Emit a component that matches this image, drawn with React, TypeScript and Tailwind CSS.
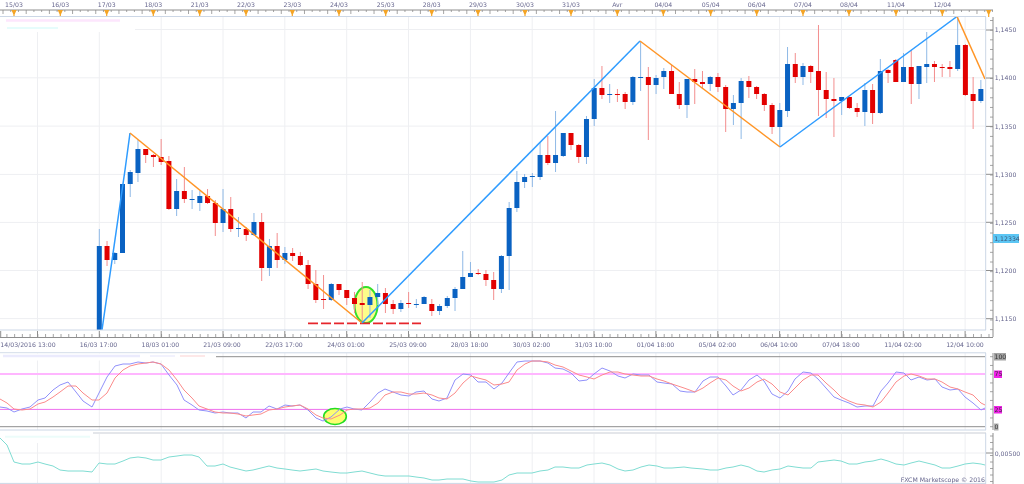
const BLUE = '#0a62c2';
const RED = '#e20000';
const TEXT = '#66668e';
const AXIS = '#8e8e8e';
const PANE = '#ccd7e6';
const GRID = '#eeeff2';

// [up?, wick top, body top, body bottom, wick bottom]
const candles: [number, number, number, number, number][] = [
  [1, 229, 246, 330, 330], [0, 241, 246, 260, 266], [1, 252, 253, 260, 264], [1, 184, 184, 253, 253],
  [1, 170, 172, 184, 197], [1, 140, 149, 173, 182], [0, 149, 149, 155, 163], [0, 154, 155, 157, 167],
  [0, 139, 157, 162, 165], [0, 156, 161, 209, 210], [1, 179, 191, 209, 216], [0, 167, 191, 199, 203],
  [1, 190, 199, 200, 209], [1, 191, 196, 203, 211], [0, 189, 196, 203, 204], [0, 200, 203, 223, 236],
  [1, 189, 209, 223, 232], [0, 197, 209, 229, 232], [1, 217, 228, 229, 237], [0, 227, 229, 235, 241],
  [1, 213, 222, 235, 236], [0, 213, 222, 268, 281], [1, 239, 246, 268, 276], [0, 233, 246, 260, 268],
  [1, 247, 253, 260, 264], [0, 248, 253, 256, 261], [0, 252, 256, 265, 266], [0, 260, 265, 284, 289],
  [0, 270, 284, 300, 303], [0, 275, 299, 300, 309], [1, 283, 284, 300, 301], [0, 284, 284, 290, 295],
  [0, 290, 290, 298, 305], [0, 292, 298, 304, 313], [0, 282, 303, 305, 323], [1, 290, 297, 305, 318],
  [1, 284, 293, 297, 305], [0, 288, 293, 304, 313], [0, 300, 304, 309, 314], [1, 300, 303, 309, 312],
  [0, 292, 303, 304, 308], [1, 299, 304, 305, 308], [1, 296, 297, 304, 304], [0, 299, 304, 311, 316],
  [1, 304, 306, 311, 315], [1, 296, 298, 306, 308], [1, 287, 289, 298, 311], [1, 251, 277, 289, 289],
  [1, 262, 273, 277, 277], [0, 269, 273, 274, 275], [0, 270, 274, 280, 286], [0, 272, 280, 289, 300],
  [1, 255, 256, 289, 293], [1, 202, 208, 256, 290], [1, 171, 182, 208, 212], [1, 174, 177, 182, 188],
  [1, 173, 176, 177, 187], [1, 143, 155, 177, 180], [0, 136, 155, 163, 165], [1, 111, 155, 163, 172],
  [1, 133, 133, 156, 157], [0, 133, 133, 145, 150], [0, 144, 145, 157, 163], [1, 116, 119, 157, 164],
  [1, 79, 88, 119, 126], [0, 66, 88, 95, 99], [1, 84, 94, 95, 103], [0, 89, 94, 94, 102],
  [0, 92, 94, 102, 109], [1, 76, 77, 102, 105], [1, 41, 77, 78, 91], [0, 67, 77, 85, 140],
  [1, 75, 78, 85, 94], [1, 68, 71, 77, 89], [0, 65, 71, 94, 94], [0, 82, 94, 105, 109],
  [1, 79, 79, 105, 118], [0, 69, 79, 82, 104], [0, 71, 82, 84, 89], [1, 76, 77, 84, 91],
  [0, 73, 77, 87, 92], [0, 85, 87, 109, 132], [1, 95, 103, 109, 125], [1, 78, 81, 103, 139],
  [0, 76, 81, 87, 98], [0, 86, 87, 94, 99], [0, 93, 94, 105, 111], [0, 103, 105, 127, 134],
  [1, 103, 110, 127, 147], [1, 47, 64, 111, 117], [0, 53, 64, 77, 83], [1, 63, 66, 77, 85],
  [0, 65, 66, 72, 83], [0, 25, 71, 90, 116], [0, 72, 90, 99, 118], [0, 78, 99, 101, 137],
  [1, 97, 97, 101, 115], [0, 97, 97, 108, 109], [0, 103, 108, 112, 117], [1, 83, 90, 112, 126],
  [0, 84, 90, 113, 124], [1, 59, 71, 113, 114], [0, 69, 70, 73, 83], [0, 59, 60, 82, 82],
  [1, 53, 67, 82, 82], [0, 50, 67, 84, 104], [1, 66, 66, 84, 99], [1, 32, 64, 67, 83],
  [0, 61, 64, 67, 82], [0, 64, 67, 68, 77], [0, 61, 67, 69, 77], [1, 17, 45, 69, 71],
  [0, 44, 45, 95, 96], [0, 77, 94, 101, 129], [1, 80, 89, 101, 103],
];

const candleX = (i: number) => 99.3 + i * 7.733;

const gridX = [37.5, 99.3, 161.2, 223, 284.8, 346.7, 408.5, 470.4, 532.2, 594, 655.9, 717.8, 779.6, 841.4, 903.3, 965.1];
const gridY = [29.5, 77.8, 126.1, 174.4, 222.4, 270.5, 318.6];

const dateMarks: [number, string][] = [
  [14, '15/03'], [60.3, '16/03'], [106.7, '17/03'], [153.3, '18/03'], [199.7, '21/03'], [246, '22/03'],
  [292.3, '23/03'], [339, '24/03'], [385.7, '25/03'], [431.7, '28/03'], [478, '29/03'], [525, '30/03'],
  [571, '31/03'], [617.3, 'Avr'], [663.3, '04/04'], [710.7, '05/04'], [756.7, '06/04'], [803, '07/04'],
  [849, '08/04'], [896, '11/04'], [942.3, '12/04'], [988.7, ''],
];

const timeLabels: [number, string][] = [
  [28, '14/03/2016 13:00'], [98.5, '16/03 17:00'], [160.3, '18/03 01:00'], [222, '21/03 09:00'],
  [284, '22/03 17:00'], [346, '24/03 01:00'], [408, '25/03 09:00'], [469.5, '28/03 18:00'],
  [531.5, '30/03 02:00'], [593.5, '31/03 10:00'], [655.5, '01/04 18:00'], [717.3, '05/04 02:00'],
  [779, '06/04 10:00'], [841, '07/04 18:00'], [903, '11/04 02:00'], [965, '12/04 10:00'],
];

const priceLabels: [number, string][] = [
  [30, '1,1450'], [78, '1,1400'], [126.4, '1,1350'], [174.3, '1,1300'], [222.3, '1,1250'], [270.5, '1,1200'], [318.7, '1,1150'],
];

// oscillator and lower pane curves, as x/y pairs read off the chart
const oscBlue = '0,407 7,408 14,412 22,409 30,407 38,400 45,398 53,390 60,385 68,382 76,392 83,401 92,407 99,393 107,377 115,366 123,364 130,364 138,362 146,363 153,362 161,364 169,375 177,385 184,400 192,405 199,410 207,411 215,413 223,412 230,413 238,413 246,418 253,412 261,412 269,406 277,409 285,405 292,406 300,405 308,410 316,418 323,421 331,417 340,409 347,407 354,409 362,410 370,402 378,393 385,389 393,392 401,395 409,396 416,392 424,391 432,399 439,401 447,398 455,380 463,374 471,375 478,382 486,382 494,389 502,383 509,373 517,362 525,361 532,361 540,361 548,363 555,368 563,369 571,373 579,381 587,380 594,374 602,368 610,371 618,376 625,378 633,374 641,375 649,375 657,382 664,383 672,384 680,391 687,392 695,392 703,381 710,377 718,377 726,386 733,395 741,390 749,380 757,375 764,381 772,394 780,398 788,391 795,379 803,372 811,373 818,379 826,388 834,397 841,400 849,403 857,407 865,406 873,406 881,391 888,383 896,372 904,373 911,380 919,377 927,380 935,379 942,387 950,390 958,389 965,397 973,403 981,410 985,408';
const oscRed = '0,399 7,403 14,409 22,410 30,409 38,404 45,402 53,397 60,392 68,386 76,386 83,393 92,400 99,400 107,393 115,378 123,370 130,366 138,364 146,363 153,362 161,364 169,370 177,380 184,390 192,398 199,406 207,409 215,412 223,413 230,413 238,414 246,416 253,415 261,414 269,410 277,409 285,407 292,406 300,405 308,409 316,415 323,418 331,419 340,415 347,410 354,409 362,409 370,408 378,403 385,395 393,392 401,392 409,394 416,394 424,393 432,395 439,398 447,399 455,393 463,383 471,376 478,378 486,380 494,385 502,384 509,382 517,370 525,364 532,361 540,361 548,362 555,365 563,367 571,371 579,375 587,377 594,379 602,375 610,372 618,372 625,374 633,375 641,376 649,376 657,379 664,381 672,384 684,388 695,392 703,388 710,383 718,378 726,380 733,386 741,391 749,388 757,382 764,379 772,384 780,392 788,395 795,388 803,380 811,375 818,375 826,383 834,390 841,397 849,401 857,404 865,405 873,407 881,402 888,393 896,382 904,376 911,374 919,376 927,379 935,379 942,382 950,387 958,389 965,392 973,395 981,403 985,405';
const volLine = '0,438 7,445 14,462 22,464 30,464 38,462 45,464 53,466 60,470 68,471 76,471 83,471 92,472 99,463 107,464 115,464 123,461 130,458 138,457 146,458 153,460 161,460 169,457 177,456 184,455 192,455 199,457 207,466 215,466 223,464 230,467 238,469 246,471 253,470 261,468 269,466 277,468 285,469 292,470 300,471 308,470 316,469 323,471 331,472 340,473 347,473 354,472 362,471 370,473 378,475 385,476 393,476 401,476 409,476 416,477 424,478 432,480 439,480 447,479 455,479 463,479 471,481 478,482 486,482 494,482 502,480 509,475 517,473 525,473 532,473 540,471 548,470 555,467 563,467 571,468 579,468 587,465 594,464 602,463 610,465 618,469 625,471 633,470 641,467 649,465 657,466 664,468 672,468 684,467 691,468 703,469 710,470 718,470 726,468 733,467 741,465 749,467 757,471 764,472 772,470 780,469 788,466 795,467 803,468 811,468 818,462 826,461 834,460 841,461 849,464 857,464 865,462 873,461 881,459 888,461 896,464 904,465 911,463 919,461 927,463 935,465 942,468 950,468 958,466 965,464 973,463 981,464 985,465';

function range(start: number, end: number, step: number) {
  const out: number[] = [];
  for (let v = start; v < end; v += step) out.push(v);
  return out;
}

function VerticalGrid({ top, bottom }: { top: number; bottom: number }) {
  return (
    <>
      {gridX.map((x) => (
        <line key={x} x1={x} x2={x} y1={top} y2={bottom} stroke={GRID} strokeWidth="1" />
      ))}
    </>
  );
}

function DateRuler() {
  return (
    <svg viewBox="0 0 1024 17" className="block h-[17px] w-[1024px] blur-[0.4px]">
      {dateMarks.map(([x, label]) => (
        <text key={x} x={x} y="7.4" textAnchor="middle" fontSize="6.2" fill={TEXT}>
          {label}
        </text>
      ))}
      <line x1="0" x2="993" y1="10" y2="10" stroke={AXIS} strokeWidth="1" />
      {range(3, 993, 7.73).map((x, i) => (
        <line key={x} x1={x} x2={x} y1="10" y2={i % 3 === 0 ? 14 : 12} stroke={AXIS} strokeWidth="0.8" />
      ))}
      {dateMarks.map(([x]) => (
        <path key={x} d={`M${x - 2.6} 10 h5.2 l-2 4.5 v2.5 h-1.2 v-2.5 z`} fill="#f4a425" />
      ))}
      <line x1="0" x2="986" y1="16.5" y2="16.5" stroke={PANE} strokeWidth="1" />
    </svg>
  );
}

function PricePane() {
  return (
    <svg viewBox="0 17 1024 320" className="block h-[320px] w-[1024px] blur-[0.4px]">
      <VerticalGrid top={17} bottom={330} />
      {gridY.map((y) => (
        <line key={y} x1="0" x2="985" y1={y} y2={y} stroke={GRID} strokeWidth="1" />
      ))}
      {/* legend sits over the grid */}
      <rect x="0" y="17" width="135" height="15" fill="#ffffff" />
      <line x1="6" x2="120" y1="20.5" y2="20.5" stroke="#fde6fd" strokeWidth="2.5" />
      <line x1="7" x2="58" y1="28" y2="28" stroke="#e6fcfc" strokeWidth="2" />

      <ellipse cx="366" cy="305" rx="11.5" ry="18" fill="#fdfd8a" stroke="#34e02a" strokeWidth="2" />

      {candles.map(([up, wickTop, top, bottom, wickBottom], i) => (
        <g key={i}>
          <line
            x1={candleX(i)}
            x2={candleX(i)}
            y1={wickTop}
            y2={wickBottom}
            stroke={up ? '#8fb9e6' : '#f38e8e'}
            strokeWidth="1"
          />
          <rect
            x={candleX(i) - 2.5}
            y={top}
            width="5"
            height={Math.max(bottom - top, 1)}
            fill={up ? BLUE : RED}
          />
        </g>
      ))}

      <line x1="308" x2="421" y1="323.3" y2="323.3" stroke="#e6262c" strokeWidth="1.8" strokeDasharray="10 3" />

      <polyline points="102,330 125,170 130,133" fill="none" stroke="#2f9cff" strokeWidth="1.5" />
      <polyline points="130,133 362,323" fill="none" stroke="#ff9526" strokeWidth="1.5" />
      <polyline points="362,323 640,41" fill="none" stroke="#2f9cff" strokeWidth="1.5" />
      <polyline points="640,41 780,147" fill="none" stroke="#ff9526" strokeWidth="1.5" />
      <polyline points="780,147 957,16.5" fill="none" stroke="#2f9cff" strokeWidth="1.5" />
      <polyline points="957,16.5 985,79" fill="none" stroke="#ff9526" strokeWidth="1.5" />

      <line x1="0" x2="986" y1="330" y2="330" stroke={PANE} strokeWidth="1" />
      <line x1="985.7" x2="985.7" y1="17" y2="330" stroke={PANE} strokeWidth="1" />
      <line x1="993" x2="993" y1="17" y2="337" stroke={AXIS} strokeWidth="1" />
      {range(20.5, 337, 9.66).map((y) => (
        <line key={y} x1="990" x2="993" y1={y} y2={y} stroke={AXIS} strokeWidth="0.8" />
      ))}
      {priceLabels.map(([y, label]) => (
        <g key={label}>
          <line x1="986" x2="993" y1={y} y2={y} stroke={AXIS} strokeWidth="1" />
          <text x="994.7" y={y + 2.4} fontSize="6.2" fill={TEXT}>
            {label}
          </text>
        </g>
      ))}
      <rect x="993" y="234" width="26" height="9" fill="#5cc6f4" />
      <text x="994.2" y="241" fontSize="6.2" fill="#3c5678">
        1,12334
      </text>

      {/* time ruler ticks along the pane's foot */}
      {range(6.9, 993, 7.733).map((x) => (
        <line key={x} x1={x} x2={x} y1="334" y2="337" stroke={AXIS} strokeWidth="0.8" />
      ))}
      {[0.7, ...gridX].map((x) => (
        <line key={x} x1={x} x2={x} y1="331" y2="337" stroke={AXIS} strokeWidth="1" />
      ))}
    </svg>
  );
}

function TimeAxis() {
  return (
    <svg viewBox="0 337 1024 15" className="block h-[15px] w-[1024px] blur-[0.4px]">
      <line x1="0" x2="993" y1="337.5" y2="337.5" stroke={AXIS} strokeWidth="1" />
      {timeLabels.map(([x, label]) => (
        <text key={label} x={x} y="347" textAnchor="middle" fontSize="6.2" fill={TEXT}>
          {label}
        </text>
      ))}
    </svg>
  );
}

function OscillatorPane() {
  return (
    <svg viewBox="0 352 1024 80" className="block h-[80px] w-[1024px] blur-[0.4px]">
      <VerticalGrid top={353} bottom={430} />
      <line x1="0" x2="986" y1="352.8" y2="352.8" stroke={PANE} strokeWidth="1" />
      <line x1="216" x2="985" y1="356.7" y2="356.7" stroke={AXIS} strokeWidth="1" />
      <rect x="0" y="353.5" width="216" height="7" fill="#ffffff" />
      <line x1="3" x2="140" y1="356" y2="356" stroke="#ebebfd" strokeWidth="2.5" />
      <line x1="150" x2="175" y1="356" y2="356" stroke="#f2f2fd" strokeWidth="2" />
      <line x1="180" x2="205" y1="356" y2="356" stroke="#fde8e8" strokeWidth="2" />

      <line x1="0" x2="985" y1="374" y2="374" stroke="#ffb6ff" strokeWidth="2" />
      <line x1="0" x2="985" y1="409.4" y2="409.4" stroke="#ee6fee" strokeWidth="1" />

      <ellipse cx="335" cy="416.5" rx="11.3" ry="8" fill="#fdfd70" stroke="#22dd22" strokeWidth="1.6" />

      <polyline points={oscBlue} fill="none" stroke="#9090fa" strokeWidth="1" />
      <polyline points={oscRed} fill="none" stroke="#fb8a8a" strokeWidth="1" />

      <line x1="0" x2="985" y1="426.7" y2="426.7" stroke={AXIS} strokeWidth="1" />
      <line x1="0" x2="986" y1="430" y2="430" stroke={PANE} strokeWidth="1" />
      <line x1="985.7" x2="985.7" y1="353" y2="430" stroke={PANE} strokeWidth="1" />
      <line x1="993" x2="993" y1="353" y2="430" stroke={AXIS} strokeWidth="1" />
      {range(356.7, 430, 8.75).map((y) => (
        <line key={y} x1="990" x2="993" y1={y} y2={y} stroke={AXIS} strokeWidth="0.8" />
      ))}

      <rect x="994" y="353" width="12" height="7.5" fill="#a3a3a3" />
      <text x="994.5" y="359" fontSize="6.2" fill="#333333">100</text>
      <rect x="994" y="370.5" width="8" height="7.5" fill="#f020e8" />
      <text x="994.5" y="376.4" fontSize="6.2" fill="#333333">75</text>
      <rect x="994" y="406" width="8" height="7.5" fill="#f020e8" />
      <text x="994.5" y="412" fontSize="6.2" fill="#333333">25</text>
      <rect x="994" y="423.5" width="4.5" height="7" fill="#b0b0b0" />
      <text x="994.4" y="429.2" fontSize="6.2" fill="#333333">0</text>
    </svg>
  );
}

function VolatilityPane() {
  return (
    <svg viewBox="0 432 1024 52" className="block h-[52px] w-[1024px] blur-[0.4px]">
      <VerticalGrid top={434} bottom={483} />
      <rect x="0" y="432" width="93" height="11" fill="#ffffff" />
      <line x1="93" x2="986" y1="433" y2="433" stroke="#e4e6ea" strokeWidth="2" />
      <line x1="5" x2="90" y1="436.7" y2="436.7" stroke="#ecfcfa" strokeWidth="2" />
      <line x1="0" x2="985" y1="453" y2="453" stroke={GRID} strokeWidth="1" />
      <polyline points={volLine} fill="none" stroke="#7fdcd2" strokeWidth="1" />
      <line x1="0" x2="986" y1="483.4" y2="483.4" stroke={PANE} strokeWidth="1" />
      <line x1="985.7" x2="985.7" y1="433" y2="484" stroke={PANE} strokeWidth="1" />
      <line x1="993" x2="993" y1="433" y2="484" stroke={AXIS} strokeWidth="1" />
      {range(436, 484, 6.5).map((y) => (
        <line key={y} x1="990" x2="993" y1={y} y2={y} stroke={AXIS} strokeWidth="0.8" />
      ))}
      <line x1="986" x2="993" y1="453" y2="453" stroke={AXIS} strokeWidth="1" />
      <text x="994.7" y="455.5" fontSize="6.2" fill={TEXT}>0,00500</text>
      <text x="985" y="482.4" textAnchor="end" fontSize="6.2" fill={TEXT}>
        FXCM Marketscope © 2016
      </text>
    </svg>
  );
}

export default function App() {
  return (
    <div className="h-[484px] w-[1024px] overflow-hidden bg-white font-['DejaVu_Sans',sans-serif]">
      <DateRuler />
      <PricePane />
      <TimeAxis />
      <OscillatorPane />
      <VolatilityPane />
    </div>
  );
}
